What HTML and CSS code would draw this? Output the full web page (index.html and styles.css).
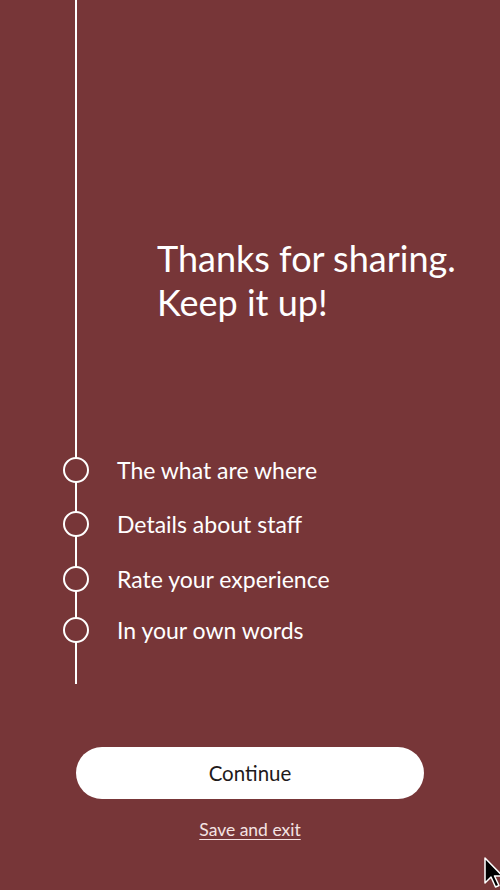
FILE: index.html
```html
<!DOCTYPE html>
<html lang="en">
<head>
<meta charset="utf-8">
<title>Thanks for sharing</title>
<link rel="stylesheet" href="styles.css">
</head>
<body>
<main class="screen">
  <section class="timeline">
    <h1 class="title">Thanks for sharing.<br>Keep it up!</h1>
    <ol class="steps">
      <li class="step"><span class="dot"></span><span class="label">The what are where</span></li>
      <li class="step"><span class="dot"></span><span class="label">Details about staff</span></li>
      <li class="step"><span class="dot"></span><span class="label">Rate your experience</span></li>
      <li class="step"><span class="dot"></span><span class="label">In your own words</span></li>
    </ol>
  </section>
  <div class="actions">
    <button class="continue" type="button">Continue</button>
    <a class="save" href="#">Save and exit</a>
  </div>
  <svg class="cursor" width="20" height="34" viewBox="0 0 20 34" aria-hidden="true">
    <path d="M1 1 L1 26 L7 20 L11.5 30 L15 28.5 L10.5 19 L18.5 19 Z" fill="#000" stroke="#fff" stroke-width="1.5" stroke-linejoin="round"/>
  </svg>
</main>
</body>
</html>
```

FILE: styles.css
```css
* { box-sizing: border-box; }
html, body {
  margin: 0;
  padding: 0;
  background: #773638;
}
body {
  font-family: "Lato", "Open Sans", sans-serif;
  color: #ffffff;
}
.screen {
  position: relative;
  width: 500px;
  height: 890px;
  overflow: hidden;
  display: flex;
  flex-direction: column;
}
.timeline {
  margin-left: 75px;
  border-left: 2px solid #ffffff;
  height: 684px;
  display: flex;
  flex-direction: column;
}
.title {
  margin: 236px 0 0 80px;
  font-size: 36px;
  line-height: 44px;
  font-weight: 400;
  letter-spacing: 0;
}
.steps {
  list-style: none;
  margin: 133px 0 0 -14px;
  padding: 0;
  display: flex;
  flex-direction: column;
  gap: 28px;
}
.step {
  display: flex;
  align-items: center;
  height: 26px;
}
.step:nth-child(3) { margin-top: 1px; }
.step:nth-child(4) { margin-top: -3px; }
.dot {
  flex: none;
  width: 26px;
  height: 26px;
  border: 2.5px solid #ffffff;
  border-radius: 50%;
  background: #773638;
}
.label {
  margin-left: 28px;
  font-size: 23px;
  line-height: 26px;
}
.actions {
  display: flex;
  flex-direction: column;
  align-items: center;
  margin-top: 63px;
}
.continue {
  width: 348px;
  height: 52px;
  border: none;
  border-radius: 26px;
  background: #ffffff;
  color: #1f1a1a;
  font-family: "Lato", "Open Sans", sans-serif;
  font-size: 20.5px;
}
.save {
  margin-top: 20px;
  color: #f4e3e3;
  font-size: 17.5px;
  line-height: 22px;
  text-decoration: underline;
  text-underline-offset: 3px;
}
.cursor {
  position: absolute;
  left: 484px;
  top: 857px;
}
```
